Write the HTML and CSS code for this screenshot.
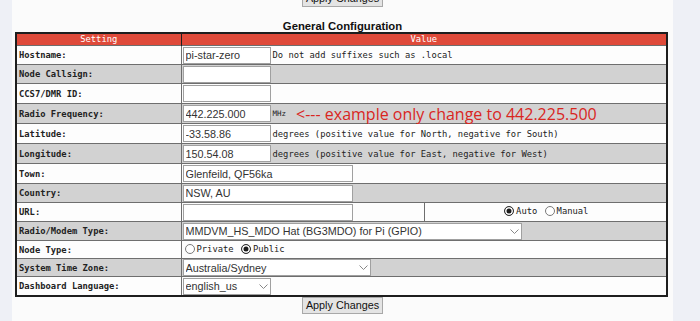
FILE: index.html
```html
<!DOCTYPE html>
<html lang="en">
  <head>
    <meta charset="UTF-8" />
    <title>Pi-Star - Configuration</title>
    <link rel="stylesheet" href="styles.css">
  </head>
  <body>
    <div class="page">
      <div class="actions top">
        <button type="button" class="apply">Apply Changes</button>
      </div>
      <div class="title">General Configuration</div>
      <table class="config">
        <colgroup>
          <col class="col-setting" />
          <col class="col-value" />
          <col class="col-extra" />
        </colgroup>
        <tr>
          <th>Setting</th>
          <th colspan="2">Value</th>
        </tr>
        <tr class="light">
          <td class="label">Hostname:</td>
          <td colspan="2"><input class="field short" type="text" value="pi-star-zero" /><span class="note">Do not add suffixes such as .local</span></td>
        </tr>
        <tr class="dark">
          <td class="label">Node Callsign:</td>
          <td colspan="2"><input class="field short" type="text" value="" /></td>
        </tr>
        <tr class="light r20">
          <td class="label">CCS7/DMR ID:</td>
          <td colspan="2"><input class="field short" type="text" value="" /></td>
        </tr>
        <tr class="dark r20">
          <td class="label">Radio Frequency:</td>
          <td colspan="2"><input class="field short" type="text" value="442.225.000" /><span class="unit">MHz</span><span class="warn">&lt;--- example only change to 442.225.500</span></td>
        </tr>
        <tr class="light r20">
          <td class="label">Latitude:</td>
          <td colspan="2"><input class="field short" type="text" value="-33.58.86" /><span class="note">degrees (positive value for North, negative for South)</span></td>
        </tr>
        <tr class="dark r20">
          <td class="label">Longitude:</td>
          <td colspan="2"><input class="field short" type="text" value="150.54.08" /><span class="note">degrees (positive value for East, negative for West)</span></td>
        </tr>
        <tr class="light r20">
          <td class="label">Town:</td>
          <td colspan="2"><input class="field wide" type="text" value="Glenfeild, QF56ka" /></td>
        </tr>
        <tr class="dark">
          <td class="label">Country:</td>
          <td colspan="2"><input class="field wide" type="text" value="NSW, AU" /></td>
        </tr>
        <tr class="light">
          <td class="label">URL:</td>
          <td><input class="field wide" type="text" value="" /></td>
          <td class="centre">
            <label class="opt"><input class="radio" type="radio" name="url" checked />Auto</label>
            <label class="opt"><input class="radio" type="radio" name="url" />Manual</label>
          </td>
        </tr>
        <tr class="dark">
          <td class="label">Radio/Modem Type:</td>
          <td colspan="2">
            <span class="pick modem">
              <select class="choice"><option>MMDVM_HS_MDO Hat (BG3MDO) for Pi (GPIO)</option></select>
              <svg class="chev" width="9" height="6" viewBox="0 0 9 6"><polyline points="0.5,0.5 4.5,4.5 8.5,0.5" fill="none" stroke="#888" stroke-width="1"/></svg>
            </span>
          </td>
        </tr>
        <tr class="light r18">
          <td class="label">Node Type:</td>
          <td colspan="2">
            <label class="opt"><input class="radio" type="radio" name="node" />Private</label>
            <label class="opt"><input class="radio" type="radio" name="node" checked />Public</label>
          </td>
        </tr>
        <tr class="dark r18">
          <td class="label">System Time Zone:</td>
          <td colspan="2">
            <span class="pick zone">
              <select class="choice"><option>Australia/Sydney</option></select>
              <svg class="chev" width="9" height="6" viewBox="0 0 9 6"><polyline points="0.5,0.5 4.5,4.5 8.5,0.5" fill="none" stroke="#888" stroke-width="1"/></svg>
            </span>
          </td>
        </tr>
        <tr class="light">
          <td class="label">Dashboard Language:</td>
          <td colspan="2">
            <span class="pick lang">
              <select class="choice"><option>english_us</option></select>
              <svg class="chev" width="9" height="6" viewBox="0 0 9 6"><polyline points="0.5,0.5 4.5,4.5 8.5,0.5" fill="none" stroke="#888" stroke-width="1"/></svg>
            </span>
          </td>
        </tr>
      </table>
      <div class="actions">
        <button type="button" class="apply">Apply Changes</button>
      </div>
    </div>
  </body>
</html>
```

FILE: styles.css
```css
body {
  margin: 0;
  padding: 0;
  background: #eef0f6;
  font-family: "DejaVu Sans Mono", monospace;
  font-size: 8.8px;
  color: #222;
  overflow: hidden;
}
.page {
  margin: -10px 27px 0 12px;
  background: #fbfbfb;
  min-height: 340px;
}
.actions {
  text-align: center;
  height: 17px;
}
.apply {
  font-family: "Liberation Sans", Arial, sans-serif;
  font-size: 10.8px;
  color: #111;
  background: #e4e4e4;
  border: 1px solid #a8a8a8;
  border-radius: 0;
  height: 17px;
  padding: 0 3px;
  margin: 0;
  line-height: 15px;
}
.title {
  font-family: "Liberation Sans", Arial, sans-serif;
  font-weight: bold;
  font-size: 11.3px;
  line-height: 12px;
  text-align: center;
  color: #111;
  margin: 13px 0 0;
}
.config {
  margin-left: 3px;
  width: 653px;
  table-layout: fixed;
  border-collapse: collapse;
  border: 2px solid #1e1e1e;
}
.col-setting {
  width: 165px;
}
.col-value {
  width: 243px;
}
.config th {
  background: #df4a3a;
  color: #fff;
  font-weight: normal;
  height: 11px;
  padding: 0;
  border-left: 1px solid #1e1e1e;
  line-height: 11px;
}
.config td {
  height: 18px;
  padding: 0 1px;
  border: 1px solid #6e6e6e;
  white-space: nowrap;
  vertical-align: middle;
}
.config tr.r20 td {
  height: 19px;
}
.config tr.r18 td {
  height: 17px;
}
.config tr.light td {
  background: #fdfdfd;
}
.config tr.dark td {
  background: #d2d2d2;
}
.config td.label {
  font-weight: bold;
  padding-left: 2px;
}
.config td.centre {
  text-align: center;
}
.field {
  box-sizing: border-box;
  height: 17px;
  border: 1px solid #a0a0a0;
  background: #fff;
  font-family: "Liberation Sans", Arial, sans-serif;
  font-size: 10.8px;
  color: #333;
  padding: 0 2px;
  margin: 0;
  vertical-align: middle;
  outline: none;
}
.short {
  width: 88px;
}
.wide {
  width: 170px;
}
.note {
  margin-left: 2px;
  vertical-align: middle;
}
.unit {
  margin-left: 2px;
  font-size: 7.5px;
  vertical-align: middle;
}
.warn {
  margin-left: 10px;
  font-family: "Open Sans", "Liberation Sans", sans-serif;
  font-size: 16px;
  line-height: 16px;
  color: #d9261f;
  vertical-align: middle;
}
.opt {
  display: inline-flex;
  align-items: center;
}
.radio {
  appearance: none;
  -webkit-appearance: none;
  box-sizing: border-box;
  width: 10px;
  height: 10px;
  margin: 0 2px 0 2px;
  border: 1px solid #7a7a7a;
  border-radius: 50%;
  background: #fff;
}
.radio:checked {
  border-color: #333;
  background: #1c1c1c;
  box-shadow: inset 0 0 0 1.5px #fff;
}
.pick {
  position: relative;
  display: inline-block;
  vertical-align: middle;
}
.choice {
  appearance: none;
  -webkit-appearance: none;
  box-sizing: border-box;
  height: 17px;
  width: 100%;
  border: 1px solid #a0a0a0;
  border-radius: 0;
  background: #fff;
  font-family: "Liberation Sans", Arial, sans-serif;
  font-size: 10.8px;
  color: #333;
  padding: 0 16px 0 2px;
  margin: 0;
  display: block;
  outline: none;
}
.chev {
  position: absolute;
  right: 3px;
  top: 6px;
  pointer-events: none;
}
.modem {
  width: 339px;
}
.zone {
  width: 188px;
}
.lang {
  width: 88px;
}
```
